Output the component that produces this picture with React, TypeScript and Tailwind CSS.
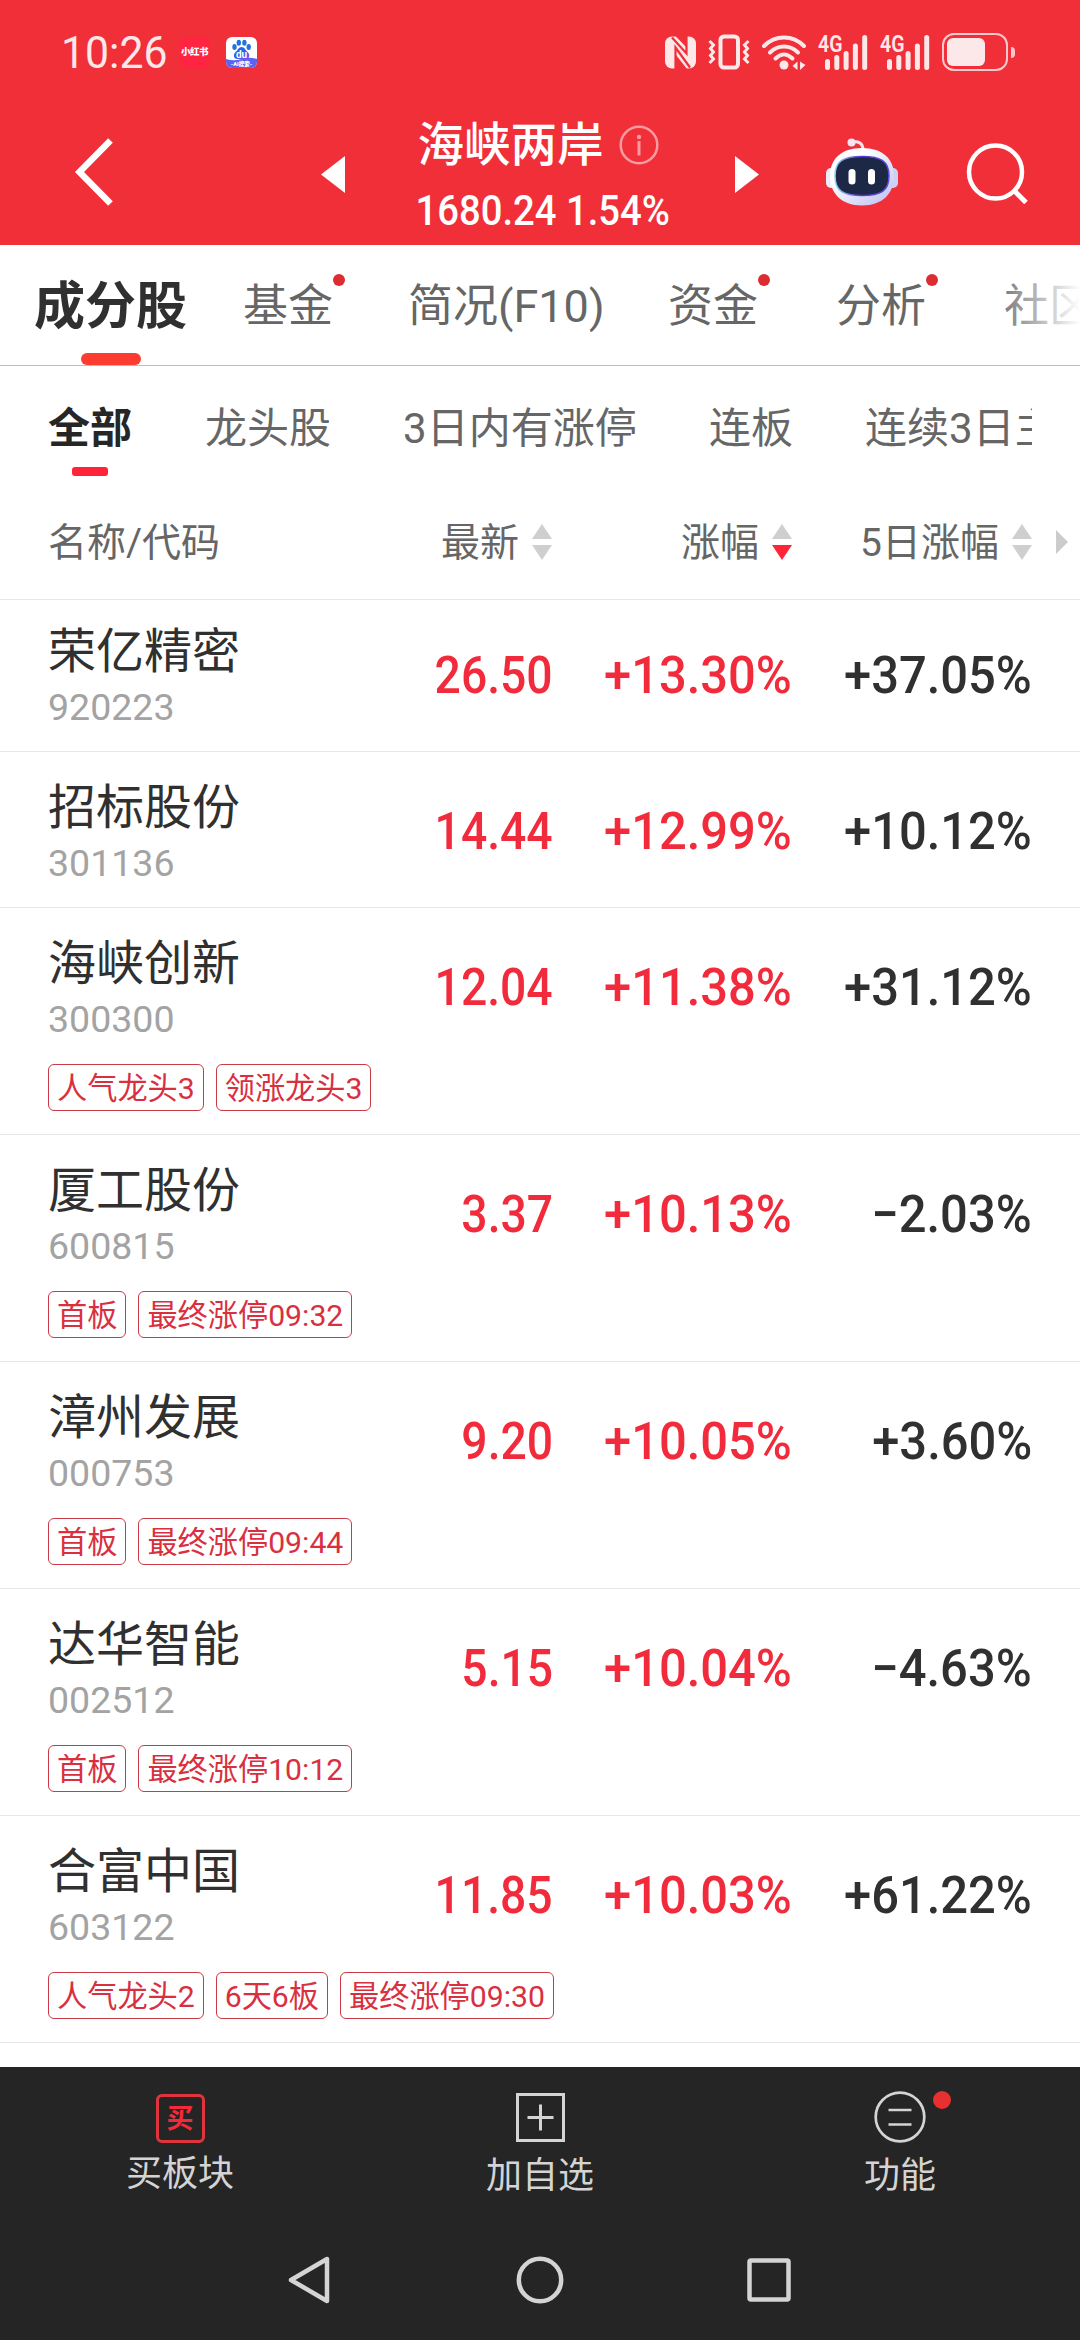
import React from 'react';
import clsx from 'clsx';

interface Stock {
  name: string;
  code: string;
  price: string;
  change: string;
  fiveDay: string;
  tags?: string[];
}

const stocks: Stock[] = [
  { name: '荣亿精密', code: '920223', price: '26.50', change: '+13.30%', fiveDay: '+37.05%' },
  { name: '招标股份', code: '301136', price: '14.44', change: '+12.99%', fiveDay: '+10.12%' },
  { name: '海峡创新', code: '300300', price: '12.04', change: '+11.38%', fiveDay: '+31.12%', tags: ['人气龙头3', '领涨龙头3'] },
  { name: '厦工股份', code: '600815', price: '3.37', change: '+10.13%', fiveDay: '−2.03%', tags: ['首板', '最终涨停09:32'] },
  { name: '漳州发展', code: '000753', price: '9.20', change: '+10.05%', fiveDay: '+3.60%', tags: ['首板', '最终涨停09:44'] },
  { name: '达华智能', code: '002512', price: '5.15', change: '+10.04%', fiveDay: '−4.63%', tags: ['首板', '最终涨停10:12'] },
  { name: '合富中国', code: '603122', price: '11.85', change: '+10.03%', fiveDay: '+61.22%', tags: ['人气龙头2', '6天6板', '最终涨停09:30'] },
];

const tabs = [
  { label: '基金', dot: true, className: 'ml-[56px]' },
  { label: '简况(F10)', dot: false, className: 'ml-[75px] w-[196px]' },
  { label: '资金', dot: true, className: 'ml-[64px]' },
  { label: '分析', dot: true, className: 'ml-[78px]' },
  { label: '社区', dot: false, className: 'ml-[78px]' },
];

const filters = [
  { label: '龙头股', className: 'ml-[73px]' },
  { label: '3日内有涨停', className: 'ml-[72px] w-[234px]' },
  { label: '连板', className: 'ml-[72px]' },
  { label: '连续3日主力', className: 'ml-[72px]' },
];

const Signal = () => (
  <svg width="50" height="36" viewBox="0 0 50 36" fill="#fde8e9">
    <text x="0" y="17.5" fontSize="23.5" fontWeight="600" textLength="24.5" lengthAdjust="spacingAndGlyphs">4G</text>
    <rect x="7" y="25" width="5" height="11" rx="2.5" />
    <rect x="16.3" y="21" width="5" height="15" rx="2.5" />
    <rect x="25.6" y="17" width="5" height="19" rx="2.5" />
    <rect x="34.9" y="9.5" width="5" height="26.5" rx="2.5" />
    <rect x="44.2" y="1" width="5" height="35" rx="2.5" />
  </svg>
);

const StatusBar = () => (
  <div className="flex h-[104px] items-center pl-[61px] text-[#fde8e9]">
    <div className="w-[118px] text-[45px] leading-none">
      <span className="inline-block origin-left scale-x-[0.95]">10:26</span>
    </div>
    <div className="flex h-[31px] w-[31px] items-center justify-center rounded-[7px] bg-[#ff2442] text-[9.5px] font-black tracking-[-0.5px] whitespace-nowrap text-white">
      小红书
    </div>
    <svg className="ml-[16px]" width="31" height="31" viewBox="0 0 31 31">
      <defs>
        <clipPath id="baidu"><rect width="31" height="31" rx="6" /></clipPath>
        <linearGradient id="paw" x1="0" y1="0" x2="1" y2="1">
          <stop offset="0.5" stopColor="#2468e8" />
          <stop offset="1" stopColor="#9a45e8" />
        </linearGradient>
      </defs>
      <g clipPath="url(#baidu)">
        <rect width="31" height="31" fill="#fff" />
        <path d="M0 22q8 2.5 15.500 0t15.500 0v9H0z" fill="#5b63f0" />
        <g fill="#2272e0">
          <ellipse cx="8.500" cy="10" rx="2.200" ry="2.900" />
          <ellipse cx="12.800" cy="5.800" rx="2.200" ry="3" />
          <ellipse cx="18.400" cy="5.800" rx="2.200" ry="3" />
          <ellipse cx="22.700" cy="10" rx="2.200" ry="2.900" />
        </g>
        <path d="M15.600 10c3 0 3.600 3 6 5s2.600 7-2 7h-8c-4.600 0-4.400-5-2-7s3-5 6-5z" fill="url(#paw)" />
        <text x="15.500" y="20.500" fontSize="10" fontWeight="700" fill="#fff" textAnchor="middle">du</text>
        <text x="15.500" y="29" fontSize="5.500" fontWeight="900" fill="#fff" textAnchor="middle">-AI搜索-</text>
      </g>
    </svg>
    <div className="ml-auto flex items-center">
      <svg width="31" height="33" viewBox="0 0 31 33">
        <rect y="0.500" width="31" height="32" rx="7" fill="#fde8e9" />
        <path d="M21.500 0V17.500L7 1.500M10.500 33V11.500L25 31.500" stroke="#f12f38" strokeWidth="2.200" fill="none" />
        <path d="M11 19L22 33H11z" fill="#f12f38" />
        <path d="M10.500 0H21L21 11z" fill="#f12f38" />
      </svg>
      <svg className="ml-[12px]" width="42" height="36" viewBox="0 0 42 36" fill="none" stroke="#fde8e9" strokeWidth="4">
        <rect x="12.500" y="2.500" width="17.500" height="31" rx="3.500" />
        <path d="M1.500 7L5.500 11L2.500 14.500L5.500 18L2.500 21.500L5.500 25L1.500 29M40.500 7L36.500 11L39.500 14.500L36.500 18L39.500 21.500L36.500 25L40.500 29" strokeWidth="3" />
      </svg>
      <svg className="ml-[12px]" width="44" height="36" viewBox="0 0 44 36" fill="none" stroke="#fde8e9" strokeWidth="4" strokeLinecap="round">
        <path d="M2 12C13 0.500 31 0.500 42 12" />
        <path d="M8 18.500C16 10.500 28 10.500 36 18.500" />
        <path d="M13.500 24.500C19 19 25 19 30.500 24.500" />
        <circle cx="22" cy="31" r="4.500" fill="#fde8e9" stroke="none" />
        <path d="M35.500 27.500V36L30.500 32zM38 27.500V36L43.500 31z" fill="#fde8e9" stroke="none" />
      </svg>
      <div className="ml-[12px] flex gap-[12px]">
        <Signal />
        <Signal />
      </div>
      <div className="ml-[12px] flex h-[38px] w-[66px] rounded-[12px] border-[2.5px] border-[#fbc9cc] p-[3px]">
        <div className="h-full w-[38px] rounded-[6px] bg-[#fde8e9]" />
      </div>
      <div className="mr-[65px] ml-[3px] h-[11px] w-[4px] rounded-r-full bg-[#fbc9cc]" />
    </div>
  </div>
);

const Robot = () => (
  <svg width="74" height="68" viewBox="0 0 74 68">
    <defs>
      <linearGradient id="shell" x1="0" y1="0" x2="1" y2="1">
        <stop offset="0.3" stopColor="#fff" />
        <stop offset="1" stopColor="#b9bdf2" />
      </linearGradient>
      <linearGradient id="rim" x1="0" y1="0" x2="1" y2="0">
        <stop offset="0" stopColor="#8fd0f5" />
        <stop offset="0.5" stopColor="#5a35c8" />
        <stop offset="1" stopColor="#5c50d8" />
      </linearGradient>
    </defs>
    <path d="M27 4.500C33 2.500 38 5 38 12" fill="none" stroke="#fbe3ec" strokeWidth="3" />
    <circle cx="26.500" cy="4.500" r="4" fill="#f6e4f2" />
    <rect x="1" y="30" width="12" height="20" rx="5" fill="#eceafb" />
    <rect x="61" y="30" width="12" height="20" rx="5" fill="#ccd0f7" />
    <path d="M37 10C58 10 69 21 69 38S58 67.500 37 67.500S5 55 5 38S16 10 37 10z" fill="url(#shell)" />
    <path d="M37 18.500C56 18.500 64 23 64 38S56 57.500 37 57.500S10 53 10 38S18 18.500 37 18.500z" fill="#1d2746" stroke="url(#rim)" strokeWidth="1.500" />
    <rect x="23.500" y="31" width="7" height="15.500" rx="3.500" fill="#fff" />
    <rect x="43" y="31" width="7" height="15.500" rx="3.500" fill="#fff" />
  </svg>
);

const Header = () => (
  <div className="h-[245px] shrink-0 bg-[#f12f38]">
    <StatusBar />
    <div className="flex h-[141px] items-center text-white">
      <svg className="mb-[5px] ml-[74px]" width="42" height="70" viewBox="0 0 42 70" fill="none" stroke="#fff" strokeWidth="6.500">
        <path d="M36.500 3.500L5.500 35L36.500 66.500" />
      </svg>
      <svg className="ml-[205px]" width="24" height="37" viewBox="0 0 24 37" fill="#fff">
        <path d="M24 0V37L0 18.500z" />
      </svg>
      <div className="ml-[38px] flex w-[320px] flex-col items-center pt-[8px]">
        <div className="flex h-[64px] items-center gap-[15px] pr-[10px]">
          <span className="text-[46.500px] leading-none font-medium">海峡两岸</span>
          <svg className="mb-[2px]" width="40" height="40" viewBox="0 0 40 40" fill="none" stroke="#f99ba0" strokeWidth="2.500">
            <circle cx="20" cy="20" r="18.300" />
            <path d="M20 16V30.500" strokeWidth="3" />
            <circle cx="20" cy="12" r="2.200" fill="#f99ba0" stroke="none" />
          </svg>
        </div>
        <div className="h-[66px] scale-x-[0.91] text-[42px] leading-[66px] font-medium whitespace-nowrap">1680.24 1.54%</div>
      </div>
      <svg className="ml-[32px]" width="24" height="37" viewBox="0 0 24 37" fill="#fff">
        <path d="M0 0V37L24 18.500z" />
      </svg>
      <div className="mb-[6px] ml-[66px]">
        <Robot />
      </div>
      <svg className="mb-[3px] ml-[67px]" width="62" height="62" viewBox="0 0 62 62" fill="none" stroke="#fff" strokeWidth="4.500">
        <circle cx="29.500" cy="30" r="26.500" />
        <path d="M48 48.500L60 60.500" strokeWidth="5" />
      </svg>
    </div>
  </div>
);

const Tabs = () => (
  <div className="relative flex h-[121px] shrink-0 overflow-hidden border-b border-[#bdbdbd] pl-[34px] leading-[124px] whitespace-nowrap">
    <div className="relative text-[51px] font-bold text-[#303030]">
      成分股
      <div className="absolute top-[108px] left-[47px] h-[12px] w-[60px] rounded-full bg-[#fc3c30]" />
    </div>
    {tabs.map((tab) => (
      <div key={tab.label} className={clsx('relative shrink-0 text-[45px] text-[#666]', tab.className)}>
        {tab.label}
        {tab.dot && <div className="absolute top-[29px] -right-[12px] h-[12px] w-[12px] rounded-full bg-[#dc2e32]" />}
      </div>
    ))}
    <div className="absolute top-0 right-0 h-[120px] w-[90px] bg-linear-to-r from-white/0 to-white" />
  </div>
);

const Filters = () => (
  <div className="mr-[48px] flex h-[118px] shrink-0 overflow-hidden pl-[48px] text-[42px] leading-[125px] whitespace-nowrap text-[#666]">
    <div className="relative font-bold text-[#262626]">
      全部
      <div className="absolute top-[101px] left-[24px] h-[9px] w-[36px] rounded-[3px] bg-[#ff2437]" />
    </div>
    {filters.map((f) => (
      <div key={f.label} className={clsx('shrink-0', f.className)}>{f.label}</div>
    ))}
  </div>
);

const SortIcon = ({ active = false }: { active?: boolean }) => (
  <svg width="20" height="36" viewBox="0 0 20 36">
    <path d="M10 0L20 15H0z" fill="#cfcfcf" />
    <path d="M0 21H20L10 36z" fill={active ? '#ff2437' : '#cfcfcf'} />
  </svg>
);

const SortLabel = ({ label, active, className }: { label: string; active?: boolean; className: string }) => (
  <div className={clsx('flex items-center justify-end gap-[13px]', className)}>
    <span className="pt-[3px]">{label}</span>
    <SortIcon active={active} />
  </div>
);

const ListHeader = () => (
  <div className="flex h-[116px] shrink-0 items-center border-b border-[#e6e6e6] pl-[48px] text-[39px] leading-none whitespace-nowrap text-[#666]">
    <div className="w-[171px] pt-[3px]">名称/代码</div>
    <SortLabel label="最新" className="w-[333px]" />
    <SortLabel label="涨幅" active className="w-[240px]" />
    <SortLabel label="5日涨幅" className="w-[240px]" />
    <svg className="ml-[24px]" width="12" height="24" viewBox="0 0 12 24" fill="#ccc">
      <path d="M0 0L12 12L0 24z" />
    </svg>
  </div>
);

const Value = ({ children, className, narrow }: { children: string; className: string; narrow?: boolean }) => (
  <div className={clsx('text-right text-[52px] leading-[61px] font-medium whitespace-nowrap', className)}>
    <span className={clsx('inline-block origin-right', narrow ? 'scale-x-[0.89]' : 'scale-x-[0.94]')}>{children}</span>
  </div>
);

const StockRow = ({ stock, first }: { stock: Stock; first: boolean }) => (
  <div
    className={clsx(
      'shrink-0 border-b border-[#e6e6e6] pl-[48px]',
      first ? 'h-[152px] pt-[22px]' : 'pt-[26px]',
      !first && (stock.tags ? 'h-[227px]' : 'h-[156px]'),
    )}
  >
    <div className="flex">
      <div className="w-[264px]">
        <div className="text-[48px] leading-[60px] text-[#303030]">{stock.name}</div>
        <div className="h-[55px] text-[37.500px] leading-[50px] text-[#a3a3a3]">{stock.code}</div>
      </div>
      <div className="flex pt-[23px]">
        <Value narrow className="w-[241px] text-[#f12b3c]">{stock.price}</Value>
        <Value className="w-[239px] text-[#f12b3c]">{stock.change}</Value>
        <Value className="w-[240px] text-[#303030]">{stock.fiveDay}</Value>
      </div>
    </div>
    {stock.tags && (
      <div className="mt-[15px] flex gap-[12px]">
        {stock.tags.map((tag) => (
          <div key={tag} className="h-[47px] rounded-[6px] border-[1.500px] border-[#c93a46] px-[8px] text-[30.200px] leading-[47px] text-[#d9303f]">
            {tag}
          </div>
        ))}
      </div>
    )}
  </div>
);

const BottomBar = () => (
  <div className="h-[273px] shrink-0 bg-[#252525] text-[36px] leading-[44px] text-[#d4d4d4]">
    <div className="grid h-[153px] grid-cols-3 pt-[24px]">
      <div className="flex flex-col items-center pt-[3px]">
        <div className="flex h-[49px] w-[49px] items-center justify-center rounded-[6px] border-[3px] border-[#e0343c] text-[27px] font-bold text-[#f32a3a]">
          买
        </div>
        <div className="mt-[9px]">买板块</div>
      </div>
      <div className="flex flex-col items-center pt-[2px]">
        <svg width="49" height="49" viewBox="0 0 49 49" fill="none" stroke="#d4d4d4" strokeWidth="3">
          <rect x="1.500" y="1.500" width="46" height="46" />
          <path d="M24.500 11.500V37.500M11.500 24.500H37.500" />
        </svg>
        <div className="mt-[12px]">加自选</div>
      </div>
      <div className="flex flex-col items-center">
        <div className="relative">
          <svg width="52" height="52" viewBox="0 0 52 52" fill="none" stroke="#d4d4d4" strokeWidth="2.700">
            <circle cx="26" cy="26" r="24.300" />
            <path d="M14.500 19H37.500M14.500 33.500H37.500" />
          </svg>
          <div className="absolute top-0 -right-[25px] h-[18px] w-[18px] rounded-full bg-[#e83030]" />
        </div>
        <div className="mt-[11px]">功能</div>
      </div>
    </div>
    <div className="flex items-center pt-[36px]">
      <svg className="ml-[287px]" width="44" height="48" viewBox="0 0 44 48" fill="none" stroke="#d4d4d4" strokeWidth="4.500" strokeLinejoin="round">
        <path d="M40 3V45L4 24z" />
      </svg>
      <svg className="ml-[185px]" width="48" height="48" viewBox="0 0 48 48" fill="none" stroke="#d4d4d4" strokeWidth="4.500">
        <circle cx="24" cy="24" r="21.200" />
      </svg>
      <svg className="ml-[183px]" width="44" height="44" viewBox="0 0 44 44" fill="none" stroke="#d4d4d4" strokeWidth="4.500" strokeLinejoin="round">
        <rect x="2.500" y="2.500" width="39" height="39" rx="1.500" />
      </svg>
    </div>
  </div>
);

const App: React.FC = () => {
  return (
    <div className="flex h-[2340px] w-[1080px] flex-col overflow-hidden bg-white font-[Roboto,'Noto_Sans_CJK_SC',sans-serif]">
      <Header />
      <Tabs />
      <Filters />
      <ListHeader />
      <div className="min-h-0 flex-1 overflow-hidden">
        {stocks.map((stock, i) => (
          <StockRow key={stock.code} stock={stock} first={i === 0} />
        ))}
      </div>
      <BottomBar />
    </div>
  );
};

export default App;
